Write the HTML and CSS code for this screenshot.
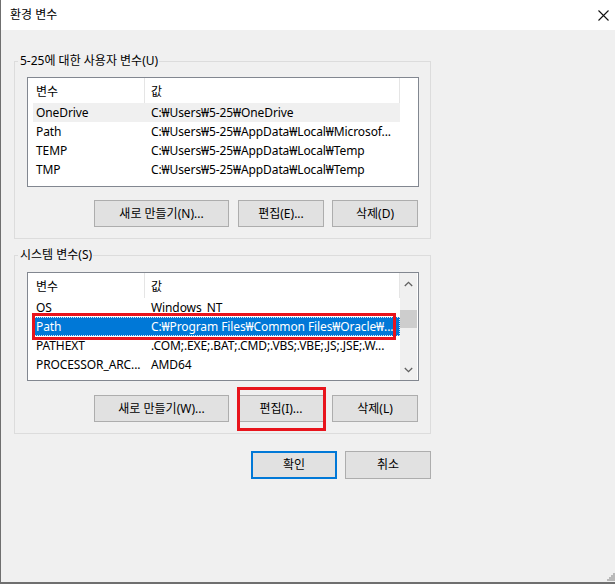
FILE: index.html
```html
<!DOCTYPE html>
<html lang="ko">
<head>
<meta charset="utf-8">
<title>환경 변수</title>
<link rel="stylesheet" href="styles.css">
</head>
<body>
<div class="window">
  <div class="titlebar">
    <span class="title">환경 변수</span>
    <svg class="close" width="11" height="11" viewBox="0 0 11 11"><path d="M0.5 0.5L10.5 10.5M10.5 0.5L0.5 10.5" stroke="#111" stroke-width="1.1"/></svg>
  </div>
  <div class="content">
    <fieldset class="group group-user">
      <legend>5-25에 대한 사용자 변수(U)</legend>
      <div class="group-inner">
        <div class="list list-user">
          <div class="list-main">
            <div class="list-header"><div class="hcol hcol-name">변수</div><div class="hcol hcol-value">값</div></div>
            <div class="row row-hover"><span class="cell-name">OneDrive</span><span class="cell-value">C:₩Users₩5-25₩OneDrive</span></div>
            <div class="row"><span class="cell-name">Path</span><span class="cell-value">C:₩Users₩5-25₩AppData₩Local₩Microsof...</span></div>
            <div class="row"><span class="cell-name">TEMP</span><span class="cell-value">C:₩Users₩5-25₩AppData₩Local₩Temp</span></div>
            <div class="row"><span class="cell-name">TMP</span><span class="cell-value">C:₩Users₩5-25₩AppData₩Local₩Temp</span></div>
          </div>
          <div class="list-side"></div>
        </div>
        <div class="btn-row btn-row-user">
          <button class="btn btn-wide">새로 만들기(N)...</button>
          <button class="btn">편집(E)...</button>
          <button class="btn">삭제(D)</button>
        </div>
      </div>
    </fieldset>

    <fieldset class="group group-system">
      <legend>시스템 변수(S)</legend>
      <div class="group-inner">
        <div class="list list-system">
          <div class="list-main">
            <div class="list-header"><div class="hcol hcol-name">변수</div><div class="hcol hcol-value">값</div></div>
            <div class="row"><span class="cell-name">OS</span><span class="cell-value">Windows_NT</span></div>
            <div class="row row-selected"><span class="cell-name">Path</span><span class="cell-value">C:₩Program Files₩Common Files₩Oracle₩...</span></div>
            <div class="row"><span class="cell-name">PATHEXT</span><span class="cell-value">.COM;.EXE;.BAT;.CMD;.VBS;.VBE;.JS;.JSE;.W...</span></div>
            <div class="row"><span class="cell-name">PROCESSOR_ARC...</span><span class="cell-value">AMD64</span></div>
            <div class="row row-partial"><span class="cell-name">PROCESSOR_IDE...</span><span class="cell-value">Intel64 Family 6 Model 158 Stepping 10, G...</span></div>
          </div>
          <div class="list-side">
            <div class="scrollbar">
              <div class="sb-btn sb-up"><svg width="9" height="6" viewBox="0 0 9 6"><path d="M0.8 5L4.5 1.3L8.2 5" fill="none" stroke="#606060" stroke-width="1.3"/></svg></div>
              <div class="sb-track"><div class="sb-thumb"></div></div>
              <div class="sb-btn sb-down"><svg width="9" height="6" viewBox="0 0 9 6"><path d="M0.8 1L4.5 4.7L8.2 1" fill="none" stroke="#606060" stroke-width="1.3"/></svg></div>
            </div>
          </div>
          <span class="annot annot-row"></span>
        </div>
        <div class="btn-row btn-row-system">
          <button class="btn btn-wide">새로 만들기(W)...</button>
          <span class="annot-wrap">
            <button class="btn">편집(I)...</button>
            <span class="annot annot-btn"></span>
          </span>
          <button class="btn">삭제(L)</button>
        </div>
      </div>
    </fieldset>

    <div class="dialog-buttons">
      <button class="btn btn-default">확인</button>
      <button class="btn">취소</button>
    </div>
  </div>
  <svg class="grip" width="8" height="8" viewBox="0 0 8 8">
    <rect x="6" y="0" width="2" height="2" fill="#b9b9b9"/>
    <rect x="4" y="2" width="2" height="2" fill="#b9b9b9"/>
    <rect x="6" y="2" width="2" height="2" fill="#b9b9b9"/>
    <rect x="2" y="4" width="2" height="2" fill="#b9b9b9"/>
    <rect x="4" y="4" width="2" height="2" fill="#b9b9b9"/>
    <rect x="6" y="4" width="2" height="2" fill="#b9b9b9"/>
    <rect x="0" y="6" width="2" height="2" fill="#b9b9b9"/>
    <rect x="2" y="6" width="2" height="2" fill="#b9b9b9"/>
    <rect x="4" y="6" width="2" height="2" fill="#b9b9b9"/>
    <rect x="6" y="6" width="2" height="2" fill="#b9b9b9"/>
  </svg>
</div>
</body>
</html>
```

FILE: styles.css
```css
* {
  box-sizing: border-box;
}

html, body {
  margin: 0;
  padding: 0;
  background: #f0f0f0;
}

body {
  font-family: "Noto Sans", "Noto Sans CJK KR", sans-serif;
  font-size: 12px;
  color: #000;
}

.window {
  position: relative;
  width: 615px;
  height: 584px;
  background: #f0f0f0;
  border-left: 1px solid #6f6f6f;
  border-bottom: 2px solid #6f6f6f;
  overflow: hidden;
}

.titlebar {
  height: 30px;
  background: #fff;
  display: flex;
  align-items: center;
  justify-content: space-between;
  padding: 0 6px 0 9px;
}

.title {
  font-size: 12px;
  line-height: 16px;
}

.close {
  display: block;
}

.content {
  padding: 23px 0 0 13px;
}

.group {
  margin: 0;
  width: 417px;
  border: 1px solid #dcdcdc;
  padding: 0 0 11px 3px;
  min-inline-size: 0;
}

.group legend {
  padding: 0 1px 0 2px;
  margin: 0;
  font-size: 12px;
  line-height: 16px;
}

.group-system {
  margin-top: 8px;
}

.group-inner {
  margin-left: 9px;
  width: 392px;
}

.list {
  position: relative;
  display: flex;
  background: #fff;
  border: 1px solid #828790;
  width: 392px;
}

.list-user {
  margin-top: 8px;
  height: 110px;
}

.list-system {
  margin-top: 9px;
  height: 109px;
}

.list-main {
  width: 372px;
  overflow: hidden;
}

.list-side {
  width: 18px;
}

.list-header {
  display: flex;
  height: 25px;
}

.hcol {
  border-right: 1px solid #e5e5e5;
  padding-top: 2px;
  line-height: 23px;
  white-space: nowrap;
}

.hcol-name {
  width: 117px;
  padding-left: 8px;
}

.hcol-value {
  width: 255px;
  padding-left: 6px;
}

.row {
  display: flex;
  margin-left: 5px;
  width: 367px;
  height: 19px;
  line-height: 19px;
  white-space: nowrap;
  letter-spacing: -0.1px;
}

.row-partial {
  padding-top: 3px;
}

.cell-name {
  width: 111px;
  padding-left: 3px;
  overflow: hidden;
  flex: none;
}

.cell-value {
  padding-left: 7px;
  overflow: hidden;
  flex: 1;
}

.row-hover {
  background: #f0f0f0;
}

.row-selected {
  background: #0078d7;
  color: #fff;
  outline: 1px dotted #d8e8f8;
  outline-offset: -1px;
}

.scrollbar {
  width: 17px;
  height: 100%;
  background: #f0f0f0;
  display: flex;
  flex-direction: column;
}

.sb-btn {
  height: 21px;
  display: flex;
  align-items: center;
  justify-content: center;
}

.sb-btn svg {
  display: block;
}

.sb-track {
  flex: 1;
}

.sb-thumb {
  margin-top: 16px;
  height: 18px;
  background: #cdcdcd;
}

.btn-row {
  display: flex;
  justify-content: flex-end;
  gap: 8px;
  padding-right: 1px;
}

.btn-row-user {
  margin-top: 13px;
}

.btn-row-system {
  margin-top: 14px;
}

.btn {
  width: 86px;
  height: 27px;
  padding: 0;
  margin: 0;
  background: #e1e1e1;
  border: 1px solid #adadad;
  font-family: inherit;
  font-size: 12px;
  color: #000;
  line-height: 16px;
}

.btn-wide {
  width: 135px;
  margin-right: 1px;
}

.annot-wrap {
  position: relative;
  display: block;
}

.annot-wrap .btn {
  display: block;
}

.annot {
  position: absolute;
  border: 3px solid #e8141c;
  pointer-events: none;
}

.annot-row {
  left: 4px;
  top: 40px;
  width: 364px;
  height: 27px;
}

.annot-btn {
  left: -1px;
  top: -8px;
  width: 89px;
  height: 44px;
}

.dialog-buttons {
  width: 417px;
  margin-top: 17px;
  display: flex;
  justify-content: flex-end;
  gap: 8px;
}

.dialog-buttons .btn {
  height: 28px;
}

.btn-default {
  border: 2px solid #0078d7;
}

.grip {
  position: absolute;
  right: 0;
  bottom: 1px;
  display: block;
}
```
